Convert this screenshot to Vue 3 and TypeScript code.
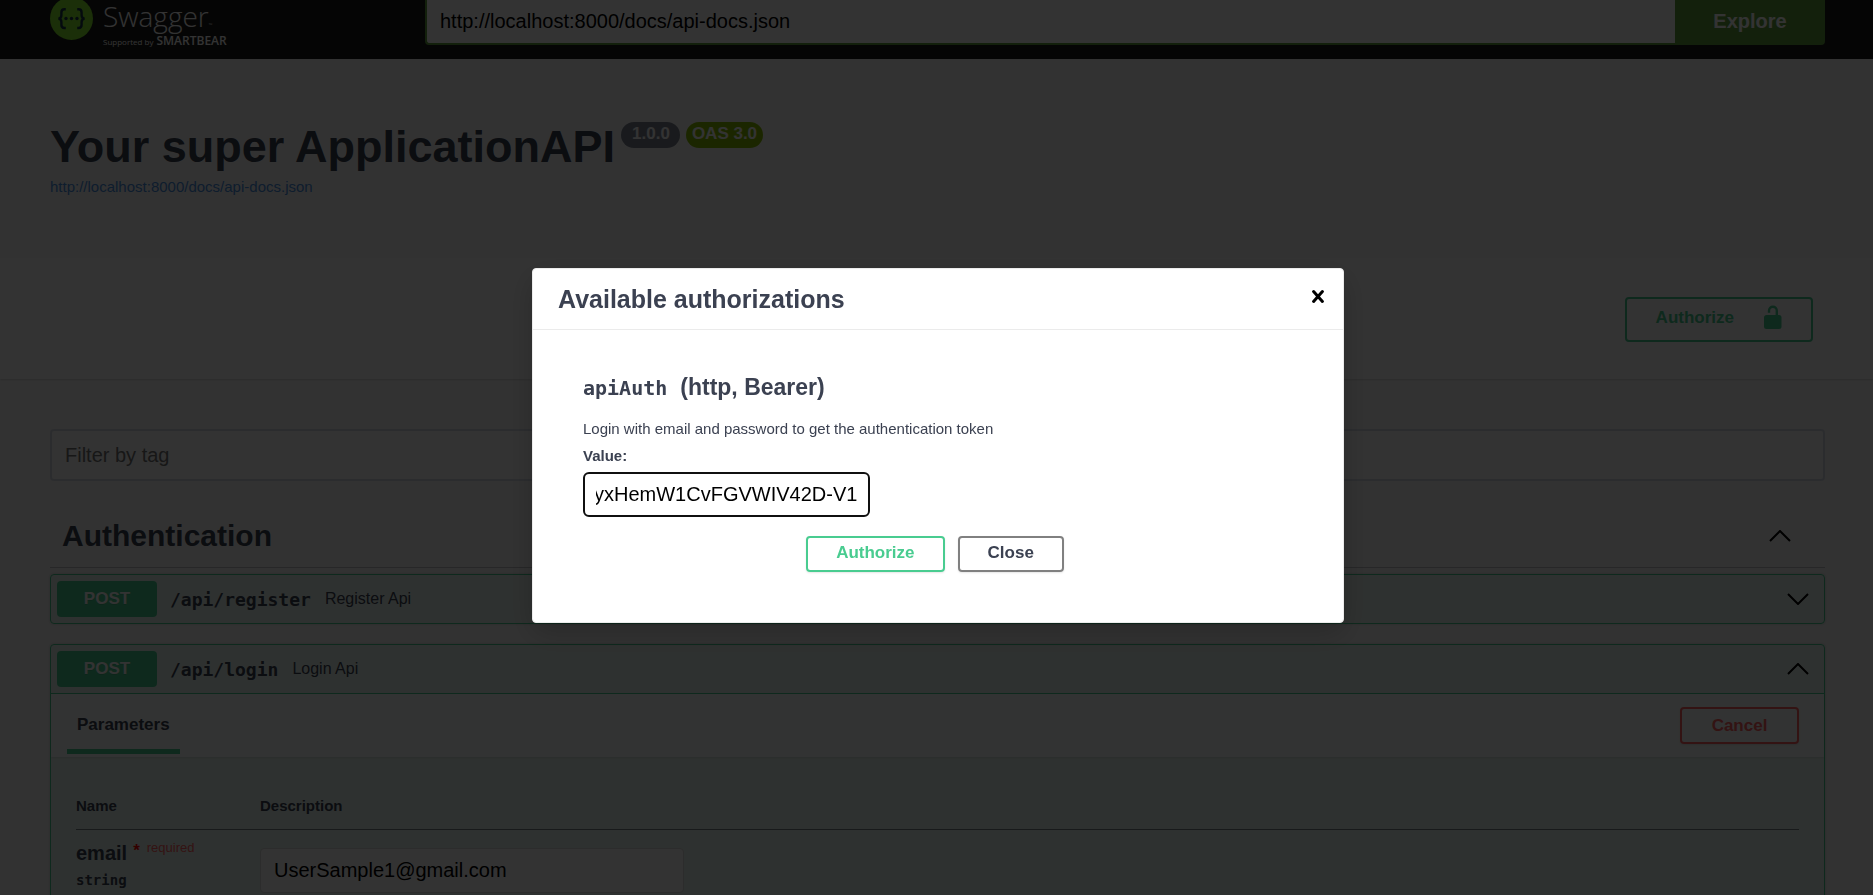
<script setup lang="ts">
import { onMounted, ref } from 'vue'

interface Operation {
  path: string
  description: string
  expanded: boolean
}

const specUrl = ref('http://localhost:8000/docs/api-docs.json')
const filter = ref('')
const email = ref('UserSample1@gmail.com')
const token = ref('yxHemW1CvFGVWIV42D-V1')
const tokenInput = ref<HTMLInputElement | null>(null)
const dialogOpen = ref(true)

const operations = ref<Operation[]>([
  { path: '/api/register', description: 'Register Api', expanded: false },
  { path: '/api/login', description: 'Login Api', expanded: true },
])

onMounted(() => {
  // keep the end of the token in view
  if (tokenInput.value) tokenInput.value.scrollLeft = tokenInput.value.scrollWidth
})
</script>

<template>
  <div class="page">
    <header class="topbar">
      <a class="logo" href="#" aria-label="Swagger, supported by SmartBear">
        <svg class="mark" viewBox="0 0 43 43" aria-hidden="true">
          <circle cx="21.5" cy="21.5" r="21.5" fill="#85ea2d" />
          <g fill="none" stroke="#173647" stroke-width="2.4">
            <path d="M15.8 12.2h-1.4c-2.2 0-3 1.2-3 3.2v2.8c0 2-.8 3.2-3 3.4 2.2.2 3 1.4 3 3.4v2.8c0 2 .8 3.2 3 3.2h1.4" />
            <path d="M27.2 12.2h1.4c2.2 0 3 1.2 3 3.2v2.8c0 2 .8 3.2 3 3.4-2.2.2-3 1.4-3 3.4v2.8c0 2-.8 3.2-3 3.2h-1.4" />
          </g>
          <g fill="#173647">
            <circle cx="16" cy="21.5" r="1.7" />
            <circle cx="21.5" cy="21.5" r="1.7" />
            <circle cx="27" cy="21.5" r="1.7" />
          </g>
        </svg>
        <span class="wordmark">
          <span class="name">Swagger<small>™</small></span>
          <span class="support">Supported by <b>SMARTBEAR</b></span>
        </span>
      </a>
      <form class="explore" @submit.prevent>
        <input v-model="specUrl" type="text" aria-label="Specification URL" />
        <button type="submit">Explore</button>
      </form>
    </header>

    <section class="info">
      <div class="title">
        <h1>Your super ApplicationAPI</h1>
        <span class="badge version">1.0.0</span>
        <span class="badge oas">OAS 3.0</span>
      </div>
      <a class="spec" href="#">http://localhost:8000/docs/api-docs.json</a>
    </section>

    <section class="scheme">
      <button class="authorize" type="button" @click="dialogOpen = true">
        <span>Authorize</span>
        <svg viewBox="0 0 18 25" aria-hidden="true">
          <rect x="0" y="10" width="17.500" height="14" rx="2.500" fill="#49cc90" />
          <path d="M5 7.800V5.700a3.900 3.900 0 0 1 7.800 0V11" fill="none" stroke="#49cc90" stroke-width="2.400" />
        </svg>
      </button>
    </section>

    <main class="content">
      <input v-model="filter" class="filter" type="text" placeholder="Filter by tag" aria-label="Filter by tag" />

      <div class="tag">
        <h2>Authentication</h2>
        <button class="chevron" type="button" aria-label="Collapse Authentication">
          <svg viewBox="0 0 22 12"><path d="M1 11 11 1l10 10" /></svg>
        </button>
      </div>

      <article v-for="op in operations" :key="op.path" class="operation">
        <div class="summary">
          <span class="method">POST</span>
          <span class="path">{{ op.path }}</span>
          <span class="description">{{ op.description }}</span>
          <button class="chevron" type="button" :aria-label="`Toggle ${op.path}`" @click="op.expanded = !op.expanded">
            <svg viewBox="0 0 22 12"><path :d="op.expanded ? 'M1 11 11 1l10 10' : 'M1 1l10 10L21 1'" /></svg>
          </button>
        </div>

        <div v-if="op.expanded" class="details">
          <div class="section">
            <h3>Parameters</h3>
            <button class="cancel" type="button">Cancel</button>
          </div>
          <div class="parameters">
            <table>
              <thead>
                <tr>
                  <th class="name-col">Name</th>
                  <th>Description</th>
                </tr>
              </thead>
              <tbody>
                <tr>
                  <td>
                    <label class="param" for="email">email<span class="star">*</span><span class="required">required</span></label>
                    <div class="type">string</div>
                  </td>
                  <td class="value-cell">
                    <input id="email" v-model="email" type="text" />
                  </td>
                </tr>
              </tbody>
            </table>
          </div>
        </div>
      </article>
    </main>

    <div v-if="dialogOpen" class="overlay">
      <section class="modal" role="dialog" aria-modal="true" aria-labelledby="dialog-title">
        <header>
          <h2 id="dialog-title">Available authorizations</h2>
          <button class="dismiss" type="button" aria-label="Close dialog" @click="dialogOpen = false">
            <svg viewBox="0 0 12 13" aria-hidden="true"><path d="M1.600 1.600 10.400 11.400M10.400 1.600 1.600 11.400" /></svg>
          </button>
        </header>
        <form class="auth" @submit.prevent>
          <h3><code>apiAuth</code><span>(http, Bearer)</span></h3>
          <p>Login with email and password to get the authentication token</p>
          <label for="token">Value:</label>
          <input id="token" ref="tokenInput" v-model="token" type="text" />
          <div class="actions">
            <button class="confirm" type="submit">Authorize</button>
            <button class="close" type="button" @click="dialogOpen = false">Close</button>
          </div>
        </form>
      </section>
    </div>
  </div>
</template>

<style>
body {
  margin: 0;
  background: #fafafa;
}
</style>

<style scoped>
* {
  box-sizing: border-box;
}

.page {
  height: 100vh;
  overflow: hidden;
  background: #fafafa;
  color: #3b4151;
  font-family: "Liberation Sans", Arial, sans-serif;
}

h1,
h2,
h3,
p {
  margin: 0;
}

button,
input {
  margin: 0;
  font-family: inherit;
}

button {
  cursor: pointer;
}

.topbar {
  display: flex;
  align-items: flex-end;
  height: 59px;
  padding: 0 48px 10px 50px;
  background: #1b1b1b;
}

.logo {
  display: flex;
  flex: none;
  align-items: flex-end;
  gap: 10px;
  width: 375px;
  color: #fff;
  font-family: "Open Sans", sans-serif;
  text-decoration: none;
}

.mark {
  width: 43px;
  height: 43px;
  margin-bottom: 9px;
}

.wordmark {
  display: flex;
  flex-direction: column;
}

.name {
  font-size: 28px;
  font-weight: 300;
  line-height: 38px;
}

.name small {
  font-size: 5px;
  line-height: 0;
}

.support {
  font-size: 8px;
  line-height: 14px;
}

.support b {
  margin-left: 1px;
  font-size: 12px;
  font-weight: 600;
  line-height: 0;
}

.explore {
  display: flex;
  flex: 1;
  height: 50px;
  margin-bottom: 4px;
}

.explore input {
  flex: 1;
  min-width: 0;
  padding: 2px 13px 0;
  border: 2px solid #62a03f;
  border-right: 0;
  border-radius: 4px 0 0 4px;
  background: #fff;
  color: #000;
  font-size: 20px;
}

.explore button {
  width: 150px;
  padding: 2px 0 0;
  border: 0;
  border-radius: 0 4px 4px 0;
  background: #62a03f;
  color: #fff;
  font-size: 20px;
  font-weight: 700;
}

.info {
  height: 199px;
  padding: 62px 48px 0 50px;
}

.title {
  display: flex;
  align-items: flex-start;
  gap: 6px;
}

h1 {
  font-size: 45px;
  line-height: 52px;
}

.badge {
  height: 26px;
  margin-top: 1px;
  border-radius: 13px;
  color: #fff;
  font-size: 17px;
  font-weight: 700;
  line-height: 24px;
}

.version {
  padding: 0 10px 0 11px;
  background: #7d8492;
}

.oas {
  padding: 0 6px;
  background: #89bf04;
}

.spec {
  display: inline-block;
  margin-top: 4px;
  color: #4990e2;
  font-size: 15px;
  line-height: 20px;
  text-decoration: none;
}

.scheme {
  display: flex;
  justify-content: flex-end;
  padding: 39px 60px 37px;
  background: #fff;
  box-shadow: 0 1px 2px rgba(0, 0, 0, 0.15);
}

.authorize {
  display: flex;
  gap: 30px;
  height: 45px;
  padding: 6px 29px;
  border: 2px solid #49cc90;
  border-radius: 4px;
  background: transparent;
  color: #49cc90;
  font-size: 17px;
  font-weight: 700;
  line-height: 26px;
}

.authorize svg {
  width: 18px;
  height: 25px;
}

.content {
  padding: 50px 48px 0 50px;
}

.filter {
  display: block;
  width: 100%;
  height: 52px;
  padding: 0 13px;
  border: 2px solid #d8dde7;
  border-radius: 4px;
  background: #fff;
  color: #000;
  font-size: 20px;
}

.filter::placeholder {
  color: #757575;
}

.tag {
  display: flex;
  align-items: center;
  justify-content: space-between;
  margin: 24px 0 6px;
  padding: 13px 34px 13px 12px;
  border-bottom: 1px solid rgba(59, 65, 81, 0.3);
}

.tag h2 {
  font-size: 30px;
  line-height: 36px;
}

.chevron {
  display: flex;
  padding: 0;
  border: 0;
  background: none;
}

.chevron svg {
  width: 22px;
  height: 12px;
  fill: none;
  stroke: #000;
  stroke-width: 2;
}

.operation {
  margin-bottom: 20px;
  border: 1px solid #49cc90;
  border-radius: 4px;
  background: rgba(73, 204, 144, 0.1);
  box-shadow: 0 0 3px rgba(0, 0, 0, 0.19);
}

.summary {
  display: flex;
  align-items: center;
  height: 48px;
  padding: 0 15px 0 6px;
}

.method {
  width: 100px;
  border-radius: 4px;
  background: #49cc90;
  color: #fff;
  font-size: 17px;
  font-weight: 700;
  line-height: 36px;
  text-align: center;
  text-shadow: 0 1px 0 rgba(0, 0, 0, 0.1);
}

.path {
  margin: 0 14px 0 13px;
  font-family: "DejaVu Sans Mono", monospace;
  font-size: 18px;
  font-weight: 700;
}

.description {
  flex: 1;
  font-size: 16px;
}

.details {
  border-top: 1px solid #49cc90;
}

.section {
  display: flex;
  align-items: flex-start;
  justify-content: space-between;
  height: 63px;
  padding: 0 25px 0 16px;
  background: rgba(255, 255, 255, 0.8);
  box-shadow: 0 1px 2px rgba(0, 0, 0, 0.1);
}

.section h3 {
  padding: 21px 10px 14px;
  border-bottom: 5px solid #49cc90;
  font-size: 17px;
  line-height: 20px;
}

.cancel {
  width: 119px;
  height: 37px;
  margin-top: 13px;
  border: 2px solid #ff6060;
  border-radius: 4px;
  background: transparent;
  box-shadow: 0 1px 2px rgba(0, 0, 0, 0.1);
  color: #ff6060;
  font-size: 17px;
  font-weight: 700;
}

.parameters {
  padding: 39px 25px;
}

table {
  width: 100%;
  border-collapse: collapse;
}

th {
  padding: 0 0 13px;
  border-bottom: 1px solid rgba(59, 65, 81, 0.4);
  font-size: 15px;
  line-height: 20px;
  text-align: left;
}

.name-col {
  width: 184px;
}

td {
  padding: 11px 0 0;
  vertical-align: top;
}

.param {
  display: flex;
  font-size: 20px;
  font-weight: 700;
  line-height: 24px;
}

.star {
  margin: 0 7px 0 6px;
  color: #f00;
  font-size: 17px;
  line-height: 20px;
}

.required {
  color: #ff6060;
  font-size: 13px;
  font-weight: 400;
  line-height: 14px;
}

.type {
  padding-top: 5px;
  font-family: "DejaVu Sans Mono", monospace;
  font-size: 14px;
  font-weight: 700;
  line-height: 20px;
}

.value-cell {
  padding-top: 18px;
}

.value-cell input {
  display: block;
  width: 424px;
  height: 45px;
  padding: 0 13px;
  border: 1px solid #d9d9d9;
  border-radius: 4px;
  background: #fff;
  color: #000;
  font-size: 20px;
}

.overlay {
  position: fixed;
  inset: 0;
  display: flex;
  align-items: flex-start;
  justify-content: center;
  padding: 268px 0 0 3px;
  background: rgba(0, 0, 0, 0.8);
}

.modal {
  width: 812px;
  border: 1px solid #ebebeb;
  border-radius: 4px;
  background: #fff;
  box-shadow: 0 10px 30px rgba(0, 0, 0, 0.2);
}

.modal header {
  display: flex;
  align-items: center;
  justify-content: space-between;
  height: 61px;
  padding: 0 19px 0 25px;
  border-bottom: 1px solid #ebebeb;
}

.modal h2 {
  font-size: 25px;
  line-height: 30px;
}

.dismiss {
  padding: 0 0 5px;
  border: 0;
  background: none;
  line-height: 0;
}

.dismiss svg {
  width: 12px;
  height: 13px;
  fill: none;
  stroke: #000;
  stroke-width: 3;
  stroke-linecap: round;
}

.auth {
  padding: 43px 50px 50px;
}

.auth h3 {
  display: flex;
  align-items: baseline;
  gap: 13px;
  font-size: 23px;
  line-height: 28px;
}

.auth code {
  font-family: "DejaVu Sans Mono", monospace;
  font-size: 20px;
}

.auth p {
  margin-top: 17px;
  font-size: 15px;
  line-height: 20px;
}

.auth label {
  display: block;
  margin: 7px 0 6px;
  font-size: 15px;
  font-weight: 700;
  line-height: 20px;
}

.auth input {
  display: block;
  width: 287px;
  height: 45px;
  padding: 0 11px;
  border: 2px solid #101010;
  border-radius: 6px;
  background: #fff;
  color: #000;
  font-size: 20px;
}

.actions {
  display: flex;
  justify-content: center;
  gap: 13px;
  margin-top: 19px;
  padding-right: 6px;
}

.actions button {
  height: 36px;
  padding: 0 28px 2px;
  border: 2px solid #49cc90;
  border-radius: 4px;
  background: transparent;
  box-shadow: 0 1px 2px rgba(0, 0, 0, 0.1);
  color: #49cc90;
  font-size: 17px;
  font-weight: 700;
}

.actions .close {
  border-color: #808080;
  color: #3b4151;
}
</style>
